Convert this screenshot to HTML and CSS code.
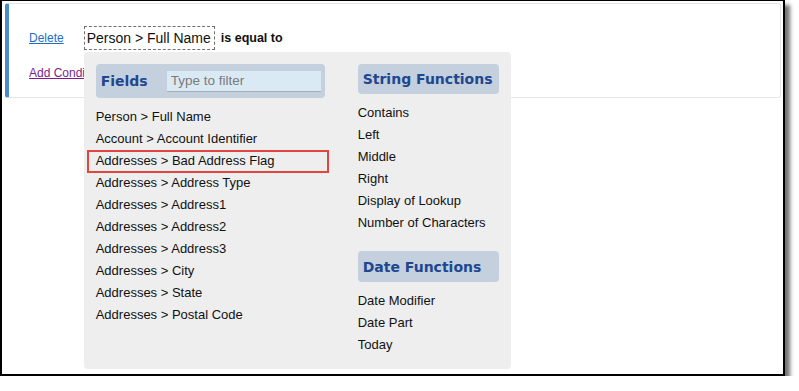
FILE: index.html
```html
<!DOCTYPE html>
<html>
<head>
<meta charset="utf-8">
<link rel="stylesheet" href="styles.css">
</head>
<body>
<div class="frame">
  <div class="card">
    <div class="row row-main">
      <a class="link link-delete" href="#">Delete</a>
      <div class="field-select">
        <span class="field-value">Person &gt; Full Name</span>
        <div class="picker">
          <div class="col col-fields">
            <div class="head head-fields">
              <span class="head-title">Fields</span>
              <input class="filter" type="text" placeholder="Type to filter">
            </div>
            <ul class="list list-fields">
              <li>Person &gt; Full Name</li>
              <li>Account &gt; Account Identifier</li>
              <li class="highlight">Addresses &gt; Bad Address Flag</li>
              <li>Addresses &gt; Address Type</li>
              <li>Addresses &gt; Address1</li>
              <li>Addresses &gt; Address2</li>
              <li>Addresses &gt; Address3</li>
              <li>Addresses &gt; City</li>
              <li>Addresses &gt; State</li>
              <li>Addresses &gt; Postal Code</li>
            </ul>
          </div>
          <div class="col col-funcs">
            <div class="head"><span class="head-title">String Functions</span></div>
            <ul class="list">
              <li>Contains</li>
              <li>Left</li>
              <li>Middle</li>
              <li>Right</li>
              <li>Display of Lookup</li>
              <li>Number of Characters</li>
            </ul>
            <div class="head head-date"><span class="head-title">Date Functions</span></div>
            <ul class="list">
              <li>Date Modifier</li>
              <li>Date Part</li>
              <li>Today</li>
            </ul>
          </div>
        </div>
      </div>
      <span class="operator">is equal to</span>
    </div>
    <div class="row row-add">
      <a class="link link-add" href="#">Add Condition</a>
    </div>
  </div>
</div>
</body>
</html>
```
FILE: styles.css
```css
html, body {
  margin: 0;
  padding: 0;
  background: #ffffff;
}

.frame {
  box-sizing: border-box;
  width: 785px;
  height: 376px;
  border: 2px solid #000;
  border-top-width: 1px;
  padding: 2px 2px 0 3px;
  background: #fff;
  box-shadow: 5px 5px 4px rgba(0, 0, 0, 0.55);
  font-family: "Liberation Sans", Arial, sans-serif;
}

.card {
  box-sizing: border-box;
  height: 95px;
  border: 1px solid #e6e6e6;
  border-left: 4px solid #4a8ccb;
  border-radius: 3px;
  padding: 22px 0 0 20px;
}

.row {
  display: flex;
  align-items: center;
}

.row-main {
  height: 24px;
}

.row-add {
  margin-top: 16px;
}

.link {
  font-size: 12px;
  line-height: 15px;
  text-decoration: underline;
}

.link-delete {
  color: #1b6fc8;
  margin-right: 20px;
}

.link-add {
  color: #7d1d8c;
}

.field-select {
  position: relative;
  box-sizing: border-box;
  height: 24px;
  border: 1px dashed #6f6f6f;
  padding: 0 3px 0 2px;
  display: flex;
  align-items: center;
}

.field-value {
  font-size: 14px;
  color: #111;
  white-space: nowrap;
}

.operator {
  margin-left: 6px;
  font-size: 12.5px;
  font-weight: bold;
  color: #111;
}

.picker {
  position: absolute;
  left: -1px;
  top: calc(100% + 3px);
  z-index: 5;
  box-sizing: border-box;
  width: 427px;
  height: 317px;
  background: #eeeeee;
  border-radius: 4px;
  padding: 12px 12px 0 12px;
  display: flex;
  gap: 33px;
}

.col-fields {
  width: 229px;
}

.col-funcs {
  width: 141px;
}

.head {
  box-sizing: border-box;
  height: 30px;
  background: #c4d0de;
  border-radius: 4px;
  padding: 0 5px;
  display: flex;
  align-items: center;
}

.head-fields {
  height: 34px;
  justify-content: space-between;
  padding: 0 4px 0 5px;
}

.head-date {
  margin-top: 17px;
  height: 31px;
}

.head-title {
  font-family: "DejaVu Sans", Verdana, sans-serif;
  font-weight: bold;
  font-size: 14px;
  color: #1e4790;
  white-space: nowrap;
}

.filter {
  box-sizing: border-box;
  width: 154px;
  height: 21px;
  border: none;
  border-bottom: 1px solid #a9adb2;
  background: #daeaf4;
  padding: 0 4px;
  font-family: "Liberation Sans", Arial, sans-serif;
  font-size: 13.5px;
  color: #222;
  outline: none;
}

.filter::placeholder {
  color: #7a7a7a;
}

.list {
  list-style: none;
  margin: 8px 0 0 0;
  padding: 0;
}

.list li {
  position: relative;
  font-size: 13px;
  line-height: 22px;
  height: 22px;
  color: #111;
  white-space: nowrap;
}

.list li.highlight::after {
  content: "";
  position: absolute;
  left: -9px;
  right: -4px;
  top: 0;
  bottom: -1px;
  border: 2px solid #e2453f;
}
```
